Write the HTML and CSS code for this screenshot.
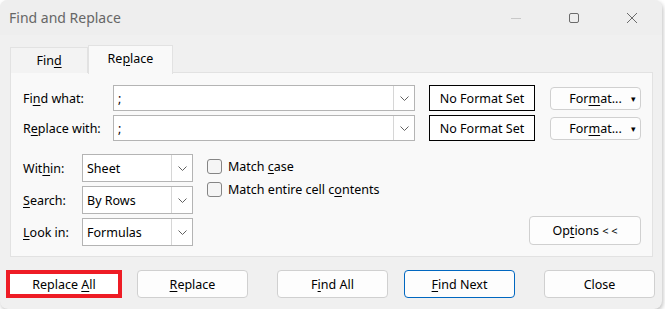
FILE: index.html
```html
<!DOCTYPE html>
<html lang="en">
<head>
  <meta charset="UTF-8">
  <meta name="viewport" content="width=device-width, initial-scale=1.0">
  <title>Find and Replace</title>
  <link rel="stylesheet" href="styles.css">
</head>
<body>
  <div class="dialog">
    <div class="titlebar">
      <span class="title">Find and Replace</span>
      <div class="wincontrols">
        <svg class="wbtn" width="12" height="12" viewBox="0 0 12 12"><path d="M1 6.5h10" stroke="#c8c8c8" stroke-width="1"/></svg>
        <svg class="wbtn" width="12" height="12" viewBox="0 0 12 12"><rect x="1.5" y="1.5" width="9" height="9" rx="1.5" fill="none" stroke="#6b6b6b" stroke-width="1"/></svg>
        <svg class="wbtn" width="12" height="12" viewBox="0 0 12 12"><path d="M1 1l10 10M11 1L1 11" stroke="#6b6b6b" stroke-width="1"/></svg>
      </div>
    </div>

    <div class="tabs">
      <div class="tab"><span>Fin<u>d</u></span></div>
      <div class="tab active"><span>Re<u>p</u>lace</span></div>
    </div>

    <div class="panel">
      <div class="row">
        <label class="lbl wide">Fi<u>n</u>d what:</label>
        <div class="combo long"><span class="val">;</span><span class="drop"><svg width="9" height="5" viewBox="0 0 9 5"><path d="M0.5 0.5l4 4 4-4" fill="none" stroke="#606060"/></svg></span></div>
        <div class="fmtbox">No Format Set</div>
        <div class="btn fmt"><span>For<u>m</u>at...</span><span class="caret">&#9662;</span></div>
      </div>
      <div class="row">
        <label class="lbl wide">R<u>e</u>place with:</label>
        <div class="combo long"><span class="val">;</span><span class="drop"><svg width="9" height="5" viewBox="0 0 9 5"><path d="M0.5 0.5l4 4 4-4" fill="none" stroke="#606060"/></svg></span></div>
        <div class="fmtbox">No Format Set</div>
        <div class="btn fmt"><span>For<u>m</u>at...</span><span class="caret">&#9662;</span></div>
      </div>

      <div class="options">
        <div class="selects">
          <div class="srow">
            <label class="lbl short">Wit<u>h</u>in:</label>
            <div class="combo small"><span class="val">Sheet</span><span class="drop"><svg width="9" height="5" viewBox="0 0 9 5"><path d="M0.5 0.5l4 4 4-4" fill="none" stroke="#606060"/></svg></span></div>
          </div>
          <div class="srow">
            <label class="lbl short"><u>S</u>earch:</label>
            <div class="combo small"><span class="val">By Rows</span><span class="drop"><svg width="9" height="5" viewBox="0 0 9 5"><path d="M0.5 0.5l4 4 4-4" fill="none" stroke="#606060"/></svg></span></div>
          </div>
          <div class="srow">
            <label class="lbl short"><u>L</u>ook in:</label>
            <div class="combo small"><span class="val">Formulas</span><span class="drop"><svg width="9" height="5" viewBox="0 0 9 5"><path d="M0.5 0.5l4 4 4-4" fill="none" stroke="#606060"/></svg></span></div>
          </div>
        </div>
        <div class="checks">
          <div class="check"><span class="box"></span><span>Match <u>c</u>ase</span></div>
          <div class="check"><span class="box"></span><span>Match entire cell c<u>o</u>ntents</span></div>
        </div>
        <div class="btn optbtn"><span>Op<u>t</u>ions <span class="lt">&lt; &lt;</span></span></div>
      </div>
    </div>

    <div class="actions">
      <div class="btn act highlight"><span>Replace <u>A</u>ll</span></div>
      <div class="btn act"><span><u>R</u>eplace</span></div>
      <div class="btn act findall"><span>F<u>i</u>nd All</span></div>
      <div class="btn act primary"><span><u>F</u>ind Next</span></div>
      <div class="btn act close"><span>Close</span></div>
    </div>
  </div>
</body>
</html>
```

FILE: styles.css
```css
body {
  margin: 0;
  background-color: #ffffff;
  font-family: 'Noto Sans', 'Open Sans', sans-serif;
  font-size: 12.5px;
  color: #000;
}

u {
  text-underline-offset: 2px;
}

.dialog {
  width: 662px;
  height: 309px;
  background-color: #f0f0f0;
  border-radius: 8px;
  box-shadow: 1px 2px 4px rgba(0, 0, 0, 0.25);
  overflow: hidden;
}

.titlebar {
  height: 35px;
  display: flex;
  align-items: center;
  justify-content: space-between;
  background-color: #eeeeee;
}

.title {
  margin-left: 9px;
  font-size: 14px;
  color: #666;
}

.wincontrols {
  display: flex;
  gap: 46px;
  margin-right: 24px;
}

.tabs {
  display: flex;
  align-items: flex-end;
  margin: 10px 0 0 10px;
  height: 28px;
  position: relative;
  z-index: 1;
}

.tab {
  box-sizing: border-box;
  height: 26px;
  width: 78px;
  display: flex;
  align-items: center;
  justify-content: center;
  background-color: #f3f3f3;
  border: 1px solid #e2e2e2;
  border-bottom: none;
}

.tab.active {
  width: 85px;
  height: 29px;
  margin-bottom: -1px;
  background-color: #f9f9f9;
  padding-bottom: 3px;
}

.panel {
  box-sizing: border-box;
  margin-left: 10px;
  width: 643px;
  height: 185px;
  margin-top: -1px;
  background-color: #f9f9f9;
  border: 1px solid #e2e2e2;
  padding: 12px 0 0 12px;
}

.row {
  display: flex;
  align-items: center;
  height: 26px;
  margin-bottom: 4px;
}

.lbl {
  display: block;
}

.lbl.wide {
  width: 90px;
}

.lbl.short {
  width: 59px;
}

.combo {
  box-sizing: border-box;
  display: flex;
  align-items: center;
  background-color: #fff;
  border: 1px solid #b4b4b4;
}

.combo .val {
  flex: 1;
  padding-left: 4px;
}

.combo .drop {
  width: 20px;
  height: 100%;
  border-left: 1px solid #d6d6d6;
  display: flex;
  align-items: center;
  justify-content: center;
}

.combo.long {
  width: 302px;
  height: 26px;
}

.combo.small {
  width: 111px;
  height: 28px;
}

.fmtbox {
  box-sizing: border-box;
  width: 106px;
  height: 26px;
  margin-left: 14px;
  border: 1px solid #000;
  background-color: #fff;
  display: flex;
  align-items: center;
  justify-content: center;
}

.btn {
  box-sizing: border-box;
  background-color: #fdfdfd;
  border: 1px solid #d0d0d0;
  border-radius: 4px;
  display: flex;
  align-items: center;
  justify-content: center;
}

.fmt {
  width: 91px;
  height: 23px;
  margin-left: 15px;
  position: relative;
}

.caret {
  position: absolute;
  right: 4px;
  font-size: 9px;
}

.options {
  display: flex;
  margin-top: 13px;
}

.selects {
  display: flex;
  flex-direction: column;
  gap: 4px;
}

.srow {
  display: flex;
  align-items: center;
}

.checks {
  margin-left: 14px;
  padding-top: 5px;
}

.check {
  display: flex;
  align-items: center;
  height: 15px;
  margin-bottom: 8px;
}

.box {
  box-sizing: border-box;
  width: 15px;
  height: 15px;
  border: 1px solid #858585;
  border-radius: 3px;
  background-color: #f5f5f5;
  margin-right: 6px;
}

.optbtn {
  width: 112px;
  height: 29px;
  margin-left: auto;
  margin-right: 11px;
  margin-top: 62px;
}

.lt {
  font-size: 11px;
}

.actions {
  display: flex;
  margin-top: 13px;
  padding-left: 6px;
}

.act {
  width: 111px;
  height: 28px;
}

.highlight {
  width: 116px;
  border: 4px solid #ee1c25;
  border-radius: 0;
  background-color: #fff;
  margin-right: 15px;
}

.findall {
  margin-left: 29px;
}

.primary {
  margin-left: 16px;
  border-color: #0067c0;
}

.close {
  margin-left: 29px;
}
```
